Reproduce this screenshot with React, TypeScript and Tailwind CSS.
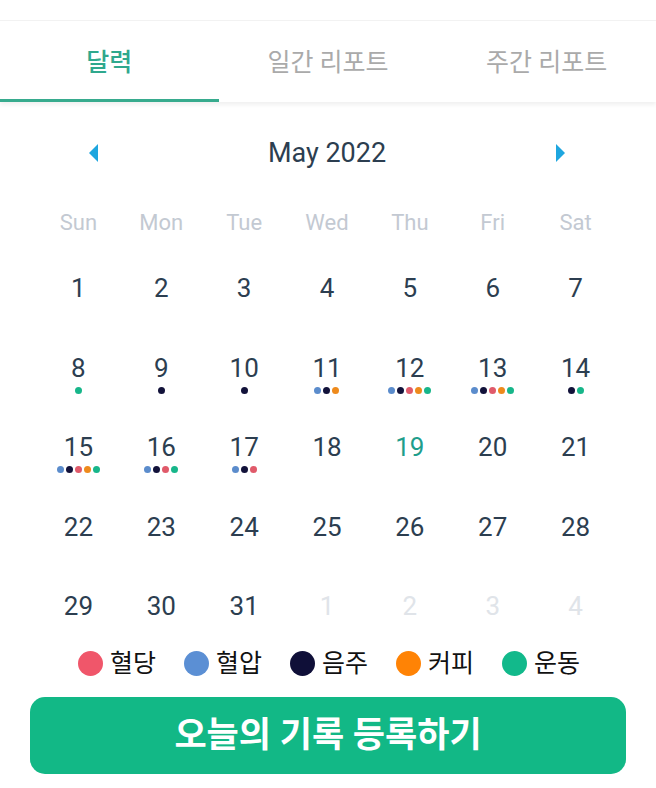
import React from "react";

const C = {
  blue: "bg-[#5b8ccc]",
  navy: "bg-[#12123a]",
  red: "bg-[#e05a6a]",
  orange: "bg-[#ee8a1c]",
  green: "bg-[#17b68a]",
};

type Day = { n: number; dots?: string[]; today?: boolean; other?: boolean };

const dotMap: Record<number, string[]> = {
  8: [C.green],
  9: [C.navy],
  10: [C.navy],
  11: [C.blue, C.navy, C.orange],
  12: [C.blue, C.navy, C.red, C.orange, C.green],
  13: [C.blue, C.navy, C.red, C.orange, C.green],
  14: [C.navy, C.green],
  15: [C.blue, C.navy, C.red, C.orange, C.green],
  16: [C.blue, C.navy, C.red, C.green],
  17: [C.blue, C.navy, C.red],
};

const days: Day[] = [];
for (let i = 1; i <= 31; i++) days.push({ n: i, dots: dotMap[i], today: i === 19 });
for (let i = 1; i <= 4; i++) days.push({ n: i, other: true });

const weekdays = ["Sun", "Mon", "Tue", "Wed", "Thu", "Fri", "Sat"];

const legend = [
  { c: "bg-[#f0566a]", t: "혈당" },
  { c: "bg-[#5b8fd4]", t: "혈압" },
  { c: "bg-[#0f0f38]", t: "음주" },
  { c: "bg-[#ff8305]", t: "커피" },
  { c: "bg-[#12b98b]", t: "운동" },
];

export default function App() {
  return (
    <div
      className="w-[656px] h-[788px] bg-white overflow-hidden"
      style={{ fontFamily: 'Roboto, "Noto Sans CJK KR", sans-serif' }}
    >
      {/* Tab bar */}
      <div className="mt-[20px] border-t border-[#f2f2f2] h-[82px] flex shadow-[0_3px_4px_rgba(0,0,0,0.06)] relative">
        <div className="flex-1 flex items-center justify-center border-b-[3px] border-[#37ab8e] text-[#2fa88d] text-[25px] font-medium pt-[6px]">
          달력
        </div>
        <div className="flex-1 flex items-center justify-center text-[#aaaaaa] text-[25px] font-normal pt-[3px]">
          일간 리포트
        </div>
        <div className="flex-1 flex items-center justify-center text-[#aaaaaa] text-[25px] font-normal pt-[3px]">
          주간 리포트
        </div>
      </div>

      {/* Month header */}
      <div className="mt-[31px] h-[40px] flex items-center justify-between pl-[89px] pr-[91px]">
        <svg width="10" height="18" viewBox="0 0 10 18">
          <polygon points="9,0 9,18 0,9" fill="#1ea6df" />
        </svg>
        <div className="text-[27px] text-[#2c3e50] leading-none">May 2022</div>
        <svg width="10" height="18" viewBox="0 0 10 18">
          <polygon points="1,0 1,18 10,9" fill="#1ea6df" />
        </svg>
      </div>

      {/* Weekdays */}
      <div className="mt-[33px] h-[32px] grid grid-cols-7 pl-[37px] pr-[39px]">
        {weekdays.map((w) => (
          <div key={w} className="flex items-center justify-center text-[22px] text-[#c3c9d2]">
            {w}
          </div>
        ))}
      </div>

      {/* Days */}
      <div className="mt-[18px] grid grid-cols-7 grid-rows-[79.5px_79.5px_79.5px_79.5px_48px] pl-[37px] pr-[39px]">
        {days.map((d, i) => (
          <div key={i} className="flex flex-col items-center pt-[16px]">
            <div
              className={
                "h-[32px] leading-[32px] text-[26px] " +
                (d.other ? "text-[#e0e4e9]" : d.today ? "text-[#1f9e8c]" : "text-[#2c3e50]")
              }
            >
              {d.n}
            </div>
            {d.dots && (
              <div className="mt-[3px] flex gap-[2px]">
                {d.dots.map((c, j) => (
                  <span key={j} className={"w-[7px] h-[7px] rounded-full " + c} />
                ))}
              </div>
            )}
          </div>
        ))}
      </div>

      {/* Legend */}
      <div className="mt-[27px] h-[28px] flex items-center justify-center gap-[28px] pl-[2px]">
        {legend.map((l) => (
          <div key={l.t} className="flex items-center gap-[7px]">
            <span className={"w-[25px] h-[25px] rounded-full " + l.c} />
            <span className="text-[25px] text-[#111] leading-none">{l.t}</span>
          </div>
        ))}
      </div>

      {/* Button */}
      <div className="mt-[20px] ml-[30px] mr-[30px] h-[77px] rounded-[15px] bg-[#12b886] flex items-center justify-center">
        <span className="text-white text-[35px] font-bold leading-none">오늘의 기록 등록하기</span>
      </div>
    </div>
  );
}
